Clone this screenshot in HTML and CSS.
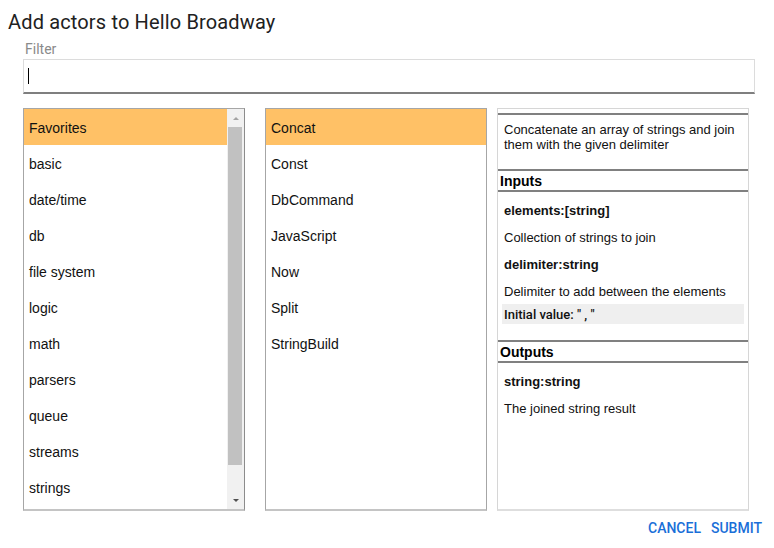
FILE: index.html
```html
<!DOCTYPE html>
<html>
<head>
<meta charset="utf-8">
<link rel="stylesheet" href="styles.css">
</head>
<body>
<div class="dialog">
  <div class="title">Add actors to Hello Broadway</div>
  <div class="content">
    <div class="filter-label">Filter</div>
    <div class="filter-field"><span class="caret"></span></div>
    <div class="panels">
      <div class="panel panel-cats">
        <ul class="list">
          <li class="selected">Favorites</li>
          <li>basic</li>
          <li>date/time</li>
          <li>db</li>
          <li>file system</li>
          <li>logic</li>
          <li>math</li>
          <li>parsers</li>
          <li>queue</li>
          <li>streams</li>
          <li>strings</li>
        </ul>
        <div class="scrollbar">
          <div class="sb-btn"><span class="arrow-up"></span></div>
          <div class="sb-track"><div class="sb-thumb"></div></div>
          <div class="sb-btn"><span class="arrow-down"></span></div>
        </div>
      </div>
      <div class="panel panel-actors">
        <ul class="list">
          <li class="selected">Concat</li>
          <li>Const</li>
          <li>DbCommand</li>
          <li>JavaScript</li>
          <li>Now</li>
          <li>Split</li>
          <li>StringBuild</li>
        </ul>
      </div>
      <div class="info">
        <div class="desc">Concatenate an array of strings and join them with the given delimiter</div>
        <div class="sec-head">Inputs</div>
        <div class="sec-body">
          <p class="pname">elements:[string]</p>
          <p class="pdesc">Collection of strings to join</p>
          <p class="pname">delimiter:string</p>
          <p class="pdesc">Delimiter to add between the elements</p>
          <div class="initial">Initial value: " , "</div>
        </div>
        <div class="sec-head">Outputs</div>
        <div class="sec-body">
          <p class="pname">string:string</p>
          <p class="pdesc">The joined string result</p>
        </div>
      </div>
    </div>
  </div>
  <div class="actions">
    <span class="btn">CANCEL</span>
    <span class="btn">SUBMIT</span>
  </div>
</div>
</body>
</html>
```

FILE: styles.css
```css
html, body {
  margin: 0;
  padding: 0;
  background: #fff;
}
body {
  font-family: "Liberation Sans", Arial, sans-serif;
  color: #111;
}
.dialog {
  width: 774px;
  height: 548px;
}
.title {
  font-family: Roboto, sans-serif;
  font-size: 20px;
  letter-spacing: 0.15px;
  line-height: 24px;
  color: #212121;
  padding: 10px 0 0 8px;
}
.content {
  padding: 0 0 0 23px;
}
.filter-label {
  font-family: Roboto, sans-serif;
  font-size: 14px;
  line-height: 16px;
  color: #8a8a8a;
  margin: 7px 0 0 2px;
}
.filter-field {
  margin-top: 2px;
  width: 726px;
  height: 32px;
  border: 1px solid #dcdcdc;
  border-bottom: 2px solid #7f7f7f;
  display: flex;
  align-items: center;
  padding-left: 4px;
  box-sizing: content-box;
}
.caret {
  display: inline-block;
  width: 1px;
  height: 16px;
  background: #000;
}
.panels {
  display: flex;
  margin-top: 14px;
  height: 403px;
}
.panel {
  border: 1px solid #a6a6a6;
  border-bottom: 2px solid #c4c4c4;
  display: flex;
  background: #fff;
}
.panel-cats {
  width: 220px;
  border-right-color: #8c8c8c;
}
.panel-actors {
  width: 220px;
  margin-left: 20px;
}
.list {
  list-style: none;
  margin: 0;
  padding: 0;
  flex: 1;
  overflow: hidden;
}
.list li {
  height: 36px;
  box-sizing: border-box;
  padding-top: 2px;
  line-height: 34px;
  font-size: 14px;
  padding-left: 5px;
  color: #111;
}
.list li.selected {
  background: #ffc166;
}
.scrollbar {
  width: 17px;
  background: #f1f1f1;
  display: flex;
  flex-direction: column;
}
.sb-btn {
  height: 18px;
  display: flex;
  align-items: center;
  justify-content: center;
}
.arrow-up {
  width: 0;
  height: 0;
  border-left: 3px solid transparent;
  border-right: 3px solid transparent;
  border-bottom: 3px solid #a3a3a3;
}
.arrow-down {
  width: 0;
  height: 0;
  border-left: 3px solid transparent;
  border-right: 3px solid transparent;
  border-top: 3px solid #505050;
}
.sb-track {
  flex: 1;
  padding: 0 2px 26px 1px;
  display: flex;
}
.sb-thumb {
  flex: 1;
  background: #c1c1c1;
}
.info {
  width: 250px;
  margin-left: 10px;
  border: 1px solid #d6d6d6;
  border-bottom: 2px solid #dedede;
}
.desc {
  margin-top: 4px;
  border-top: 2px solid #808080;
  padding: 7px 6px 17px;
  font-size: 13px;
  line-height: 15px;
}
.sec-head {
  border-top: 2px solid #808080;
  border-bottom: 2px solid #808080;
  font-size: 14px;
  font-weight: bold;
  padding: 1px 0 0 2px;
  line-height: 18px;
  color: #000;
}
.sec-body {
  padding: 4px 0 16px;
}
.sec-body p {
  margin: 0;
  padding: 7px 6px 5px;
  font-size: 13px;
  line-height: 15px;
}
.pname {
  font-weight: bold;
}
.initial {
  margin: 0 4px;
  padding: 1px 2px 0;
  background: #efefef;
  line-height: 19px;
  font-family: Roboto, sans-serif;
  font-size: 13px;
  font-weight: 500;
  color: #111;
}
.actions {
  display: flex;
  justify-content: flex-end;
  gap: 10px;
  margin-top: 9px;
  padding-right: 12px;
}
.btn {
  font-family: Roboto, sans-serif;
  font-size: 14px;
  font-weight: 500;
  line-height: 16px;
  color: #1a6fd8;
}
```
